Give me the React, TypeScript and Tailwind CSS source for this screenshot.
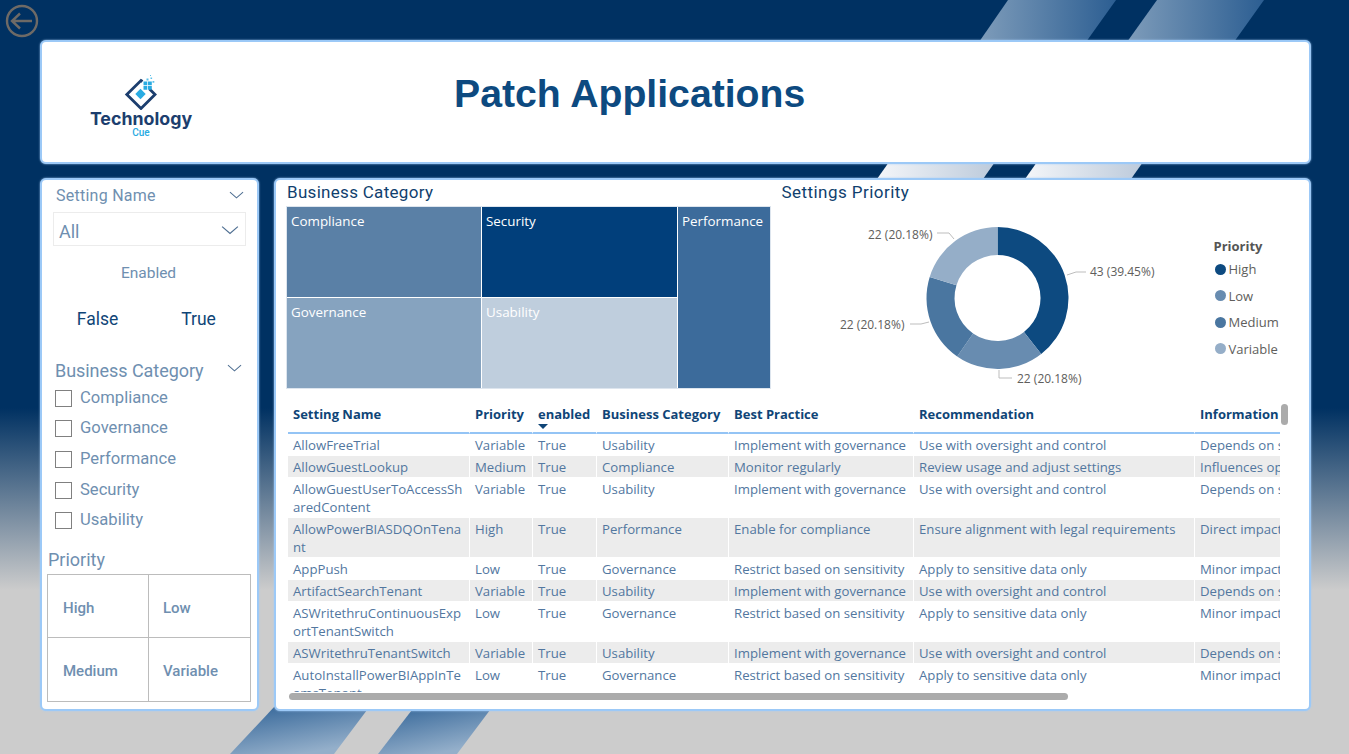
import * as React from 'react';

const din = 'font-[Roboto,sans-serif]';
const seg = "font-['Open_Sans',sans-serif]";
const card = 'bg-white border-2 border-[#9cc9f7] rounded-[6px] shadow-[0_0_2px_#a9cff7]';

const rows = [
  ['AllowFreeTrial', 'Variable', 'True', 'Usability', 'Implement with governance', 'Use with oversight and control', 'Depends on settings'],
  ['AllowGuestLookup', 'Medium', 'True', 'Compliance', 'Monitor regularly', 'Review usage and adjust settings', 'Influences operations'],
  ['AllowGuestUserToAccessSh\naredContent', 'Variable', 'True', 'Usability', 'Implement with governance', 'Use with oversight and control', 'Depends on settings'],
  ['AllowPowerBIASDQOnTena\nnt', 'High', 'True', 'Performance', 'Enable for compliance', 'Ensure alignment with legal requirements', 'Direct impact on data'],
  ['AppPush', 'Low', 'True', 'Governance', 'Restrict based on sensitivity', 'Apply to sensitive data only', 'Minor impact on users'],
  ['ArtifactSearchTenant', 'Variable', 'True', 'Usability', 'Implement with governance', 'Use with oversight and control', 'Depends on settings'],
  ['ASWritethruContinuousExp\nortTenantSwitch', 'Low', 'True', 'Governance', 'Restrict based on sensitivity', 'Apply to sensitive data only', 'Minor impact on users'],
  ['ASWritethruTenantSwitch', 'Variable', 'True', 'Usability', 'Implement with governance', 'Use with oversight and control', 'Depends on settings'],
  ['AutoInstallPowerBIAppInTe\namsTenant', 'Low', 'True', 'Governance', 'Restrict based on sensitivity', 'Apply to sensitive data only', 'Minor impact on users'],
];

const headers = ['Setting Name', 'Priority', 'enabled', 'Business Category', 'Best Practice', 'Recommendation', 'Information'];
const cols = 'grid grid-cols-[182px_63px_64px_132px_185px_281px_200px] w-[1107px]';

const categories = ['Compliance', 'Governance', 'Performance', 'Security', 'Usability'];

const legend = [
  ['High', 'bg-[#0d4a80]'],
  ['Low', 'bg-[#688cb0]'],
  ['Medium', 'bg-[#4a76a0]'],
  ['Variable', 'bg-[#95aec8]'],
];

function arc(start: number, end: number) {
  const cx = 215.5, cy = 91, R = 71, r = 43;
  const p = (a: number, rad: number) => {
    const t = ((a - 90) * Math.PI) / 180;
    return `${(cx + rad * Math.cos(t)).toFixed(2)} ${(cy + rad * Math.sin(t)).toFixed(2)}`;
  };
  const large = end - start > 180 ? 1 : 0;
  return `M${p(start, R)}A${R} ${R} 0 ${large} 1 ${p(end, R)}L${p(end, r)}A${r} ${r} 0 ${large} 0 ${p(start, r)}Z`;
}

function Chevron({ className }: { className: string }) {
  return (
    <svg viewBox="0 0 16 8" fill="none" stroke="#4f6f92" strokeWidth="1.1" className={className}>
      <path d="M1 1l7 6 7-6" />
    </svg>
  );
}

function Backdrop() {
  return (
    <svg className="absolute inset-0" width="1349" height="754" viewBox="0 0 1349 754">
      <defs>
        <linearGradient id="top" x1="0" y1="0" x2="1" y2="0">
          <stop offset="0" stopColor="#7e9cba" />
          <stop offset="1" stopColor="#2c5e92" />
        </linearGradient>
        <linearGradient id="mid" x1="0" y1="0" x2="1" y2="0">
          <stop offset="0" stopColor="#f4f6f9" />
          <stop offset="1" stopColor="#bccadb" />
        </linearGradient>
        <linearGradient id="low" x1="0" y1="0" x2="0.5" y2="1">
          <stop offset="0" stopColor="#2f6296" />
          <stop offset="1" stopColor="#94afca" />
        </linearGradient>
      </defs>
      <path d="M1008 0h108l-30 42H979z" fill="url(#top)" />
      <path d="M1157 0h107l-30 42h-107z" fill="url(#top)" />
      <path d="M889 162h106l-12 17H877z" fill="url(#mid)" />
      <path d="M1037 162h106l-12 17h-106z" fill="url(#mid)" />
      <path d="M275 706h95l-36 48H230z" fill="url(#low)" />
      <path d="M415 706h78l-36 48h-79z" fill="url(#low)" />
    </svg>
  );
}

function Logo() {
  return (
    <div className="flex flex-col items-center w-[104px]">
      <svg width="34" height="36" viewBox="0 0 34 36">
        <path d="M18.5 7.5L17 6.5 2.8 20.5 17 34.5 31 20.5 25.5 15" fill="none" stroke="#1c3e6e" strokeWidth="2.8" />
        <path d="M16.5 14.8l5.2 5.2-5.2 5.2-5.2-5.2z" fill="#29abe2" />
        <path d="M19.5 7.5h3.8v3.8h-3.8zM24 7.5h3.8v3.8H24zM19.5 12h3.8v3.8h-3.8zM24 12h3.8v3.8H24z" fill="#29abe2" />
        <path d="M22.5 4.5h2v2h-2zM26.5 3.5h1.6v1.6h-1.6zM28.5 7h1.8v1.8h-1.8zM26 1h1v1h-1z" fill="#5cc1ea" />
      </svg>
      <div className="font-['Inter',sans-serif] font-bold text-[17.8px] leading-[20px] text-[#1c3e6e] -mt-[1px] whitespace-nowrap">Technology</div>
      <div className={`${din} font-medium text-[10px] leading-[10px] text-[#29abe2] -mt-[1px]`}>Cue</div>
    </div>
  );
}

function Sidebar() {
  return (
    <aside className={`${din} ${card} w-[219px] shrink-0 flex flex-col pt-[6px] text-[#6f8fb0]`}>
      <div className="flex items-center justify-between pl-[14px] pr-[13px] h-[20px]">
        <span className="text-[16px] tracking-[0.25px]">Setting Name</span>
        <Chevron className="w-[15px] h-[8px] -mt-[3px]" />
      </div>
      <div className="mx-[11px] mt-[6px] h-[34px] border border-[#ececec] flex items-center justify-between pl-[5px] pr-[5px]">
        <span className="text-[18px] pt-[5px]">All</span>
        <Chevron className="w-[18px] h-[10px] mr-[1px] mt-[1px]" />
      </div>
      <div className="mt-[17px] text-center text-[15.5px] leading-[20px] pr-[2px]">Enabled</div>
      <div className="mt-[25px] grid grid-cols-2 pl-[4px] pr-[9px] text-[17.5px] leading-[22px] text-[#0f4577] text-center">
        <span className="pl-[2px]">False</span>
        <span className="pl-[2px]">True</span>
      </div>
      <div className="mt-[29px] flex items-center justify-between pl-[13px] pr-[15px] h-[22px]">
        <span className="text-[18px] -tracking-[0.05px]">Business Category</span>
        <Chevron className="w-[15px] h-[8px] -mt-[4px]" />
      </div>
      <ul className="mt-[5px] pl-[13px] flex flex-col gap-[6.7px]">
        {categories.map((c) => (
          <li key={c} className="flex items-center gap-[8px] h-[24px] text-[16.6px]">
            <span className="w-[17px] h-[17px] border border-[#808080]" />
            {c}
          </li>
        ))}
      </ul>
      <div className="mt-[15.6px] pl-[6px] text-[18px] leading-[24px]">Priority</div>
      <div className="mt-[2px] ml-[5px] w-[204px] h-[128px] border border-[#bcbcbc] grid grid-cols-[101px_1fr] grid-rows-2 text-[15px] font-medium">
        <div className="border-r border-b border-[#bcbcbc] flex items-center pl-[15px] pt-[3px]">High</div>
        <div className="border-b border-[#bcbcbc] flex items-center pl-[14px] pt-[3px]">Low</div>
        <div className="border-r border-[#bcbcbc] flex items-center pl-[15px] pt-[3px]">Medium</div>
        <div className="flex items-center pl-[14px] pt-[3px]">Variable</div>
      </div>
    </aside>
  );
}

function Treemap() {
  const cell = `text-white text-[13.4px] leading-[18px] pl-[4px] pt-[5px] ${seg}`;
  return (
    <div className="-ml-px grid grid-cols-[193.5px_194.5px_91.5px] grid-rows-[89.5px_89.5px] gap-[1.5px] w-[484.5px] h-[182.5px] bg-white border border-[#dde5ee]">
      <div className={`${cell} bg-[#5a80a6]`}>Compliance</div>
      <div className={`${cell} bg-[#013f7b]`}>Security</div>
      <div className={`${cell} bg-[#3c6b9b] row-span-2`}>Performance</div>
      <div className={`${cell} bg-[#86a3bf]`}>Governance</div>
      <div className={`${cell} bg-[#bfcedd]`}>Usability</div>
    </div>
  );
}

function Donut() {
  const label = 'fill-[#605e5c] text-[12px]';
  const line = { fill: 'none', stroke: '#bdbdbd', strokeWidth: 1 };
  return (
    <svg width="428" height="188" viewBox="0 0 428 188" className={seg}>
      <path d={arc(0, 142)} fill="#0d4a80" />
      <path d={arc(142, 214.6)} fill="#688cb0" />
      <path d={arc(214.6, 287.3)} fill="#4a76a0" />
      <path d={arc(287.3, 360)} fill="#95aec8" />
      <path d="M285 68l9-3h10" {...line} />
      <path d="M155 26h12l5 6" {...line} />
      <path d="M128 117h11l8-2" {...line} />
      <path d="M217 163v8h13" {...line} />
      <text x="308" y="69" className={label}>43 (39.45%)</text>
      <text x="86" y="32" className={label}>22 (20.18%)</text>
      <text x="58" y="122" className={label}>22 (20.18%)</text>
      <text x="235" y="176" className={label}>22 (20.18%)</text>
    </svg>
  );
}

function Legend() {
  return (
    <div className={`${seg} ml-[4px] mt-[30px] text-[13px] text-[#605e5c] w-[66px] overflow-hidden`}>
      <div className="font-bold leading-[18px] text-[#555]">Priority</div>
      <ul className="mt-[5px] flex flex-col gap-[8.6px]">
        {legend.map(([name, bg]) => (
          <li key={name} className="flex items-center gap-[3px] leading-[18px] whitespace-nowrap">
            <span className={`w-[11px] h-[11px] rounded-full shrink-0 ml-[1px] ${bg}`} />
            {name}
          </li>
        ))}
      </ul>
    </div>
  );
}

function SettingsTable() {
  return (
    <div className={`${seg} relative mt-[9px] ml-[1px] w-[993px] h-[288px]`}>
      <div className="w-[992px] h-full overflow-hidden">
        <div className={`${cols} h-[30px] text-[#0f4577] text-[13px] font-bold`}>
          {headers.map((h) => (
            <div key={h} className="relative border-b-2 border-r border-b-[#94c4f5] border-r-white pl-[5px] leading-[20px] whitespace-nowrap">
              {h}
              {h === 'enabled' && (
                <svg width="10" height="5" viewBox="0 0 10 5" className="absolute left-[5px] top-[20px]">
                  <path d="M0 0h10L5 5z" fill="#0f4577" />
                </svg>
              )}
            </div>
          ))}
        </div>
        {rows.map((r, i) => (
          <div key={r[0]} className={`${cols} text-[13.2px] leading-[18px] text-[#52779f]`}>
            {r.map((c, j) => (
              <div
                key={j}
                className={`pl-[5px] pt-[2px] pb-[1px] whitespace-pre-line overflow-hidden border-r border-b border-white ${i % 2 ? 'bg-[#ececec]' : 'bg-white'}`}
              >
                {c}
              </div>
            ))}
          </div>
        ))}
      </div>
      <div className="absolute left-[993px] top-0 w-[7px] h-[21px] rounded-full bg-[#ababab]" />
      <div className="absolute left-[1px] top-[289px] w-[779px] h-[7px] rounded-full bg-[#ababab]" />
    </div>
  );
}

export default function App() {
  return (
    <div className="relative w-[1349px] h-[754px] overflow-hidden bg-[linear-gradient(180deg,#003162_0,#003162_408px,#cccccc_590px,#cccccc_100%)]">
      <Backdrop />
      <svg width="34" height="34" viewBox="0 0 34 34" fill="none" stroke="#6e6a66" strokeWidth="2.4" className="absolute left-[5px] top-[4px]">
        <circle cx="17" cy="17" r="15" />
        <path d="M27 17H8M15 9.5L7 17l8 7.5" />
      </svg>
      <div className="relative pt-[40px] pl-[40px] pr-[38px] flex flex-col gap-[14px]">
        <header className={`${card} h-[124px] flex`}>
          <div className="pl-[47px] pt-[32px] w-[412px]">
            <Logo />
          </div>
          <h1 className="font-['Liberation_Sans',sans-serif] font-bold text-[39.2px] leading-[44px] text-[#0d4a80] mt-[30px] whitespace-nowrap">
            Patch Applications
          </h1>
        </header>
        <div className="flex gap-[15px] h-[533px]">
          <Sidebar />
          <main className={`${card} flex-1 pl-[11px]`}>
            <div className="flex gap-[11px]">
              <section>
                <h2 className={`${din} text-[17px] leading-[24px] text-[#103f6e] tracking-[0.3px] mb-[2px]`}>Business Category</h2>
                <Treemap />
              </section>
              <section>
                <h2 className={`${din} text-[17px] leading-[24px] text-[#103f6e] tracking-[0.45px] mb-[3px]`}>Settings Priority</h2>
                <div className="flex">
                  <Donut />
                  <Legend />
                </div>
              </section>
            </div>
            <SettingsTable />
          </main>
        </div>
      </div>
    </div>
  );
}
